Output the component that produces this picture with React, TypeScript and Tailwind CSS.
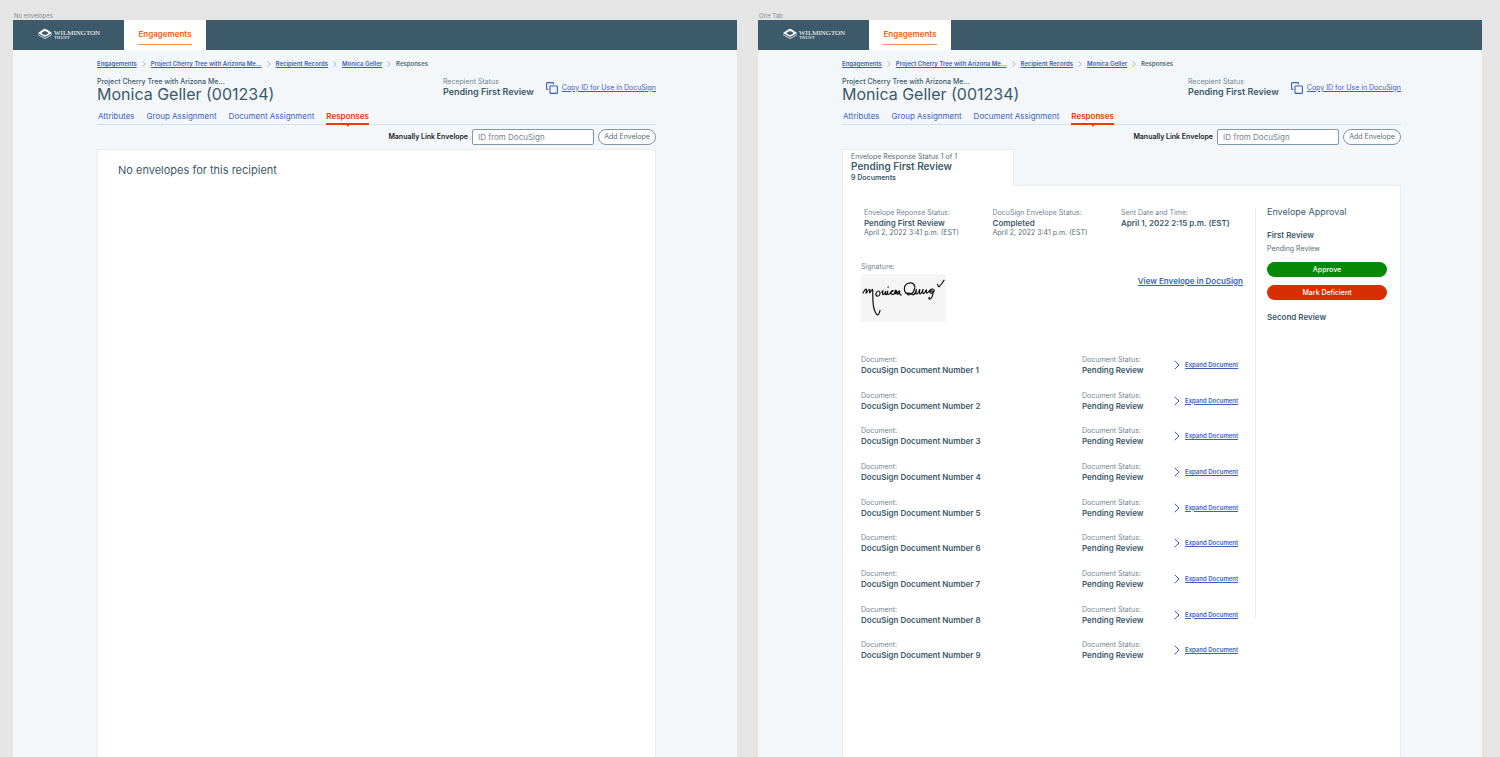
import React from 'react';

const breadcrumbs = ['Engagements', 'Project Cherry Tree with Arizona Me...', 'Recipient Records', 'Monica Geller'];

const tabs = ['Attributes', 'Group Assignment', 'Document Assignment', 'Responses'];

const documents = Array.from({ length: 9 }, (_, i) => `DocuSign Document Number ${i + 1}`);

const Chevron: React.FC<{ className: string }> = ({ className }) => (
  <svg className={className} viewBox="0 0 6 10" fill="none" stroke="currentColor" strokeLinecap="round" aria-hidden="true">
    <path d="M1 1l4 4-4 4" />
  </svg>
);

const Logo: React.FC = () => (
  <div className="flex items-center gap-[2px] text-white">
    <svg className="h-[11px] w-[14px]" viewBox="0 0 14 11" fill="currentColor" aria-hidden="true">
      <path
        d="M0 5L5.500 1.200Q7 .3 8.500 1.200L14 5 8.500 8.300Q7 9.200 5.500 8.300zM3.200 5l2.600 1.700q1.200.7 2.400 0L10.800 5 8.200 3.400q-1.200-.7-2.400 0z"
        fillRule="evenodd"
      />
      <path d="M0 6.200l5.500 3.200q1.500.8 3 0L14 6.200v.8l-5.500 3.300q-1.500.9-3 0L0 7z" />
    </svg>
    <div className="mt-[3px] font-['Liberation_Serif',serif]">
      <div className="text-[7px] leading-[6px]">WILMINGTON</div>
      <div className="text-[5px] leading-[4px]">TRUST</div>
    </div>
  </div>
);

const CopyIcon: React.FC = () => (
  <svg className="h-3 w-3" viewBox="0 0 12 12" fill="none" stroke="currentColor" strokeWidth="1.1" aria-hidden="true">
    <path d="M2.400 7.400H1.200a.6.6 0 01-.6-.6V1.200a.6.6 0 01.6-.6h5.600a.6.6 0 01.6.6v1.200" />
    <rect x="4" y="4" width="7.4" height="7.4" rx=".7" />
  </svg>
);

const Signature: React.FC = () => (
  <svg
    className="h-12 w-[85px] bg-[#f5f5f5]"
    viewBox="0 0 85 48"
    fill="none"
    stroke="#111"
    strokeWidth="1.2"
    strokeLinecap="round"
    strokeLinejoin="round"
    role="img"
    aria-label="Signature of Monica Geller"
  >
    <path d="M2 19c1-2 2-4 3-4s0 3 0 4 2.500-4 3.500-3.700-.3 3 0 3.500 2-3.500 3-3.500c.8 4-.3 10 1 17 .8 4 2.500 9 4.500 8.500 1.300-.8 1.500-2.800 2-4.300" />
    <path d="M15 21c-.5-2 1-4 2.500-4s2 2.500 1 4-3 1.500-3.500 0M20.500 18c.7 0 1.200-.8 1.500-1.300-.4 2-.8 4 .3 4s1.900-2 2.400-3.300c-.3 1.500-.5 3.300.4 3.300s1.200-2 1.600-3.500c-.3 2-.3 3.300.6 3.300s2-1.500 2.400-2.200 1.400-1.800 2.300-1.500-2 .2-2 2.200 2.300 1.500 3.500.3-.2-2.800 1-3 1.300 1.300.2 1.900-2 1.300-.8 1.600 3.300-2.200 4.300-2.800-2.800 1-2.200 2.600 2.400-.3 2.700-2.300c-.5 1.500-.2 3.800 1.800 3.700" />
    <path d="M27 13.200l.3-.2" />
    <path d="M47 20c-4.500-1-5-8.500-.3-10.500s8.300 1.300 6.800 6-6 6.500-7.500 4.500c-.5-1.500 3.500-1 5.500.5 2 1.200 3-2 4-5-.5 2.500-1.200 4.700.3 4.500s2.200-3 3-4.500c-.4 2.300-.6 4.500.7 4.300s1.800-3 2.500-4.200c-.4 2-.4 4.200.9 4s1.500-3.700 2.600-3.700c-.2 2-.5 3.200.6 3.200s2-3.500 4.500-4c3-.5 3.500 2 1.200 3.500-1.800 1-3.500.3-2.700-1s3.500-1 3.100 1-1.300 5.500-2.800 6.200-2-.7-1-1.500" />
    <path d="M76.500 10.500c.6.800.8 2.500 1.500 2.200 1.500-1 3.500-4 5-6.500" />
  </svg>
);

interface FieldProps {
  label: string;
  value: string;
  note?: string;
}

const Field: React.FC<FieldProps> = ({ label, value, note }) => (
  <div className="leading-[10px]">
    <div className="text-[7px] text-[#71858f]">{label}</div>
    <div className="text-[8px] font-semibold">{value}</div>
    {note && <div className="text-[7px] text-[#536c78]">{note}</div>}
  </div>
);

const TopBar: React.FC = () => (
  <header className="flex h-[30px] bg-[#3c5a6a]">
    <div className="w-[111px] pt-[7px] pl-[25px]">
      <Logo />
    </div>
    <nav className="flex w-[82px] justify-center bg-white pt-2">
      <a href="#" className="h-[17px] border-b border-[#ff8a50] text-[8px] leading-[13px] font-semibold text-[#ff5a0a]">
        Engagements
      </a>
    </nav>
  </header>
);

const RecipientHeader: React.FC<{ inputId: string }> = ({ inputId }) => (
  <>
    <nav className="flex items-center gap-[5px] text-[6px] leading-[10px] font-semibold">
      {breadcrumbs.map((crumb) => (
        <React.Fragment key={crumb}>
          <a href="#" className="text-[#3d5fc0] underline">
            {crumb}
          </a>
          <Chevron className="h-[6px] w-1 text-[#71858f]" />
        </React.Fragment>
      ))}
      <span className="text-[#536c78]">Responses</span>
    </nav>
    <div className="mt-2 flex justify-between">
      <div>
        <div className="text-[7px] leading-[10px] font-medium">Project Cherry Tree with Arizona Me...</div>
        <h1 className="text-[16px] leading-[14px]">Monica Geller (001234)</h1>
      </div>
      <div className="flex gap-3">
        <div className="leading-[10px]">
          <div className="text-[7px] text-[#71858f]">Recepient Status</div>
          <div className="text-[9px] font-semibold">Pending First Review</div>
        </div>
        <button className="flex h-[22px] items-center gap-1 text-[7px] text-[#3d5fc0] underline">
          <CopyIcon />
          Copy ID for Use in DocuSign
        </button>
      </div>
    </div>
    <nav className="mt-2 flex gap-3 border-b border-[#d5e0e5] pl-px text-[8px] leading-[14px] text-[#3d5fc0]">
      {tabs.map((tab) =>
        tab === 'Responses' ? (
          <a key={tab} href="#" className="relative -mb-px border-b-2 border-[#f03800] font-semibold text-[#f03800]">
            {tab}
            <svg className="absolute top-full left-1/2 mt-px h-[3px] w-1 -translate-x-1/2" viewBox="0 0 4 3" fill="currentColor" aria-hidden="true">
              <path d="M0 0h4L2 3z" />
            </svg>
          </a>
        ) : (
          <a key={tab} href="#">
            {tab}
          </a>
        ),
      )}
    </nav>
    <form className="mt-1 flex items-center justify-end gap-1 text-[7px]">
      <label htmlFor={inputId} className="font-semibold text-[#1a1a1a]">
        Manually Link Envelope
      </label>
      <input
        id={inputId}
        type="text"
        placeholder="ID from DocuSign"
        className="h-4 w-[122px] rounded-xs border border-[#8296a6] bg-white px-[5px] text-[8px] placeholder:text-[#71858f]"
      />
      <button type="button" className="h-4 w-[58px] rounded-full border border-[#8296a6] bg-white text-[#536c78]">
        Add Envelope
      </button>
    </form>
  </>
);

interface ArtboardProps {
  title: string;
  inputId: string;
  children: React.ReactNode;
}

const Artboard: React.FC<ArtboardProps> = ({ title, inputId, children }) => (
  <section className="flex min-w-0 flex-1 flex-col">
    <div className="pt-3 pl-px text-[6px] leading-2 text-[#8c8c8c]">{title}</div>
    <div className="flex grow flex-col bg-[#f3f7fa]">
      <TopBar />
      <main className="flex grow flex-col pt-[9px] pr-[81px] pl-[84px]">
        <RecipientHeader inputId={inputId} />
        {children}
      </main>
    </div>
  </section>
);

const EnvelopePanel: React.FC = () => (
  <>
    <div className="relative -mb-px mt-1 h-[37px] w-[172px] rounded-t-xs border border-b-0 border-[#e6eef2] bg-white pt-[3px] pl-2">
      <div className="text-[7px] leading-2 text-[#536c78]">Envelope Response Status 1 of 1</div>
      <div className="text-[10px] leading-[10px] font-semibold">Pending First Review</div>
      <div className="mt-[3px] text-[7px] leading-2 font-semibold">9 Documents</div>
    </div>
    <div className="flex grow border border-b-0 border-[#e6eef2] bg-white pt-[22px]">
      <div className="min-w-0 grow pr-3 pl-[18px]">
        <div className="grid grid-cols-[1fr_1fr_122px] pl-[3px]">
          <Field label="Envelope Reponse Status:" value="Pending First Review" note="April 2, 2022 3:41 p.m. (EST)" />
          <Field label="DocuSign Envelope Status:" value="Completed" note="April 2, 2022 3:41 p.m. (EST)" />
          <Field label="Sent Date and Time:" value="April 1, 2022 2:15 p.m. (EST)" />
        </div>
        <div className="mt-6 flex items-start justify-between">
          <div>
            <div className="pb-[2px] text-[7px] leading-[10px] text-[#71858f]">Signature:</div>
            <Signature />
          </div>
          <a href="#" className="mt-[13px] text-[8px] leading-3 font-semibold text-[#3d5fc0] underline">
            View Envelope in DocuSign
          </a>
        </div>
        <ul className="mt-[33px] grid h-[321px] auto-rows-fr">
          {documents.map((name) => (
            <li key={name} className="flex items-start">
              <div className="grow">
                <Field label="Document:" value={name} />
              </div>
              <div className="w-[92px]">
                <Field label="Document Status:" value="Pending Review" />
              </div>
              <button className="mt-[5px] flex w-[69px] items-center gap-[5px] text-[6px] leading-[10px] font-semibold whitespace-nowrap text-[#3d5fc0] underline">
                <Chevron className="h-[10px] w-[6px]" />
                Expand Document
              </button>
            </li>
          ))}
        </ul>
      </div>
      <aside className="h-[410px] w-[145px] shrink-0 border-l border-[#e6eef2] pr-[13px] pl-[11px]">
        <h2 className="text-[9px] leading-2">Envelope Approval</h2>
        <h3 className="mt-[14px] text-[8px] leading-[10px] font-semibold">First Review</h3>
        <p className="mt-1 text-[7px] leading-[10px] text-[#536c78]">Pending Review</p>
        <button className="mt-2 block h-[15px] w-full rounded-full bg-[#068a06] pt-px text-[7px] font-medium text-white">
          Approve
        </button>
        <button className="mt-2 block h-[15px] w-full rounded-full bg-[#d92f00] pt-px text-[7px] font-medium text-white">
          Mark Deficient
        </button>
        <h3 className="mt-3 text-[8px] leading-[10px] font-semibold">Second Review</h3>
      </aside>
    </div>
  </>
);

const App: React.FC = () => (
  <div className="flex min-h-screen gap-[21px] bg-[#e5e5e5] pr-[18px] pl-[13px] font-['Inter',sans-serif] text-[#3c5a6a]">
    <Artboard title="No envelopes" inputId="envelope-id-empty">
      <div className="mt-1 grow border border-b-0 border-[#e6eef2] bg-white px-5 pt-3">
        <p className="text-[11px] leading-4">No envelopes for this recipient</p>
      </div>
    </Artboard>
    <Artboard title="One Tab" inputId="envelope-id-single">
      <EnvelopePanel />
    </Artboard>
  </div>
);

export default App;
